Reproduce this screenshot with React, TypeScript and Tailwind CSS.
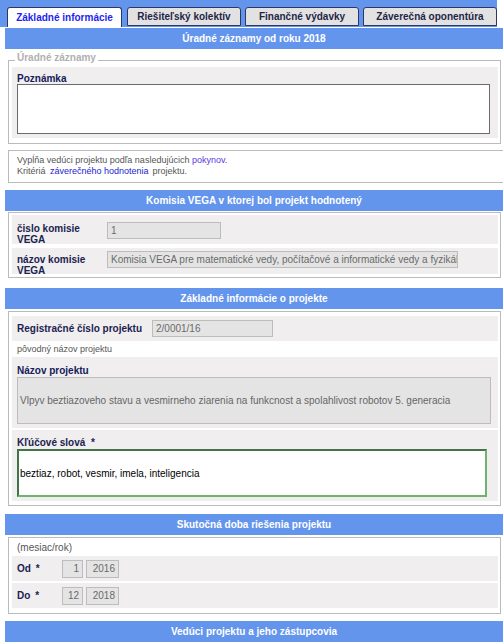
import React from "react"

const TABS = [
  { label: "Základné informácie", width: "w-[115px]", gap: "" },
  { label: "Riešiteľský kolektív", width: "w-[114px]", gap: "ml-[5px]" },
  { label: "Finančné výdavky", width: "w-[114px]", gap: "ml-[4px]" },
  { label: "Záverečná oponentúra", width: "w-[134px]", gap: "ml-[4px]" },
]

function Header({ title, className = "" }: { title: string; className?: string }) {
  return (
    <div
      className={`ml-[5px] flex h-[21px] w-[498px] items-center justify-center bg-[#6495ed] text-[10px] font-bold text-white ${className}`}
    >
      {title}
    </div>
  )
}

function Box({ children, className = "" }: { children: React.ReactNode; className?: string }) {
  return (
    <div className={`ml-[8px] w-[493px] border border-[#bbbbbb] pr-[2px] pl-[3px] ${className}`}>
      {children}
    </div>
  )
}

function Field({ value, className = "" }: { value: string; className?: string }) {
  return (
    <div
      className={`flex h-[17px] items-center overflow-hidden border border-[#bcbcbc] bg-[#e4e4e4] px-[3px] text-[10px] whitespace-nowrap text-[#6a6a6a] ${className}`}
    >
      {value}
    </div>
  )
}

export default function App() {
  return (
    <div className="w-[503px] overflow-hidden bg-white font-['Liberation_Sans',Arial,sans-serif] text-[#555]">
      {/* tabs */}
      <div className="flex h-[27px] w-[497px] items-end bg-[#6495ed] pl-[7px]">
        {TABS.map((tab, i) =>
          i === 0 ? (
            <div
              key={tab.label}
              className={`${tab.width} flex h-[20px] items-center justify-center rounded-t-[3px] border border-b-0 border-[#2d3766] bg-white text-[10px] font-bold text-[#1f1ff0]`}
            >
              {tab.label}
            </div>
          ) : (
            <div
              key={tab.label}
              className={`${tab.width} ${tab.gap} mb-[1px] flex h-[19px] items-center justify-center rounded-t-[3px] border border-[#2d3766] bg-[#e2e2e2] text-[10px] font-bold text-[#1f2547]`}
            >
              {tab.label}
            </div>
          ),
        )}
      </div>

      <Header title="Úradné záznamy od roku 2018" className="mt-[1px]" />

      {/* úradné záznamy */}
      <fieldset className="mt-[4px] ml-[8px] w-[493px] min-w-0 border border-[#bbbbbb] pr-[2px] pb-[5px] pl-[3px]">
        <legend className="ml-[3px] px-[2px] pb-[4px] text-[10px] leading-[10px] font-bold text-[#b0b0b0]">
          Úradné záznamy
        </legend>
        <div className="bg-[#f0eeee] pt-[6px] pr-[8px] pb-[4px] pl-[5px]">
          <div className="text-[10px] leading-[11px] font-bold text-[#14205a]">Poznámka</div>
          <div className="h-[50px] w-[473px] border border-[#6b6b6b] bg-white" />
        </div>
      </fieldset>

      {/* pokyny */}
      <div className="mt-[6px] ml-[8px] w-[500px] border border-[#bbbbbb] pt-[4px] pb-[5px] pl-[8px] text-[9px] leading-[11px]">
        <div>
          Vypĺňa vedúci projektu podľa nasledujúcich <span className="text-[#5a38e0]">pokynov.</span>
        </div>
        <div>
          Kritériá <span className="ml-[2px] text-[#2323d0]">záverečného hodnotenia</span>
          <span className="ml-[4px]">projektu.</span>
        </div>
      </div>

      <Header title="Komisia VEGA v ktorej bol projekt hodnotený" className="mt-[7px]" />

      <Box className="mt-[1px] pt-[2px] pb-[3px]">
        <div className="flex h-[29px] bg-[#f0eeee] pl-[5px]">
          <div className="w-[90px] pt-[8px] text-[10px] leading-[11px] font-bold text-[#1a2350]">
            čislo komisie
            <br />
            VEGA
          </div>
          <Field value="1" className="mt-[7px] w-[114px]" />
        </div>
        <div className="mt-[4px] flex h-[26px] bg-[#f0eeee] pl-[5px]">
          <div className="w-[90px] pt-[6px] text-[10px] leading-[11px] font-bold text-[#1a2350]">
            názov komisie
            <br />
            VEGA
          </div>
          <Field
            value="Komisia VEGA pre matematické vedy, počítačové a informatické vedy a fyzikál"
            className="mt-[3px] w-[351px]"
          />
        </div>
      </Box>

      <Header title="Základné informácie o projekte" className="mt-[10px]" />

      <Box className="mt-[2px] pt-[4px] pb-[4px]">
        <div className="flex h-[25px] items-center bg-[#f0eeee] pl-[5px]">
          <div className="w-[135px] text-[10px] leading-[12px] font-bold text-[#1a2350]">
            Registračné číslo projektu
          </div>
          <Field value="2/0001/16" className="w-[121px]" />
        </div>
        <div className="h-[16px] pl-[5px] text-[9px] leading-[16px]">pôvodný názov projektu</div>
        <div className="bg-[#f0eeee] pt-[8px] pb-[4px] pl-[5px]">
          <div className="text-[10px] leading-[12px] font-bold text-[#14205a]">Názov projektu</div>
          <div className="flex h-[47px] w-[474px] items-center border border-[#bcbcbc] bg-[#e4e4e4] pl-[2px] text-[10px] text-[#666]">
            Vlpyv beztiazoveho stavu a vesmirneho ziarenia na funkcnost a spolahlivost robotov 5. generacia
          </div>
        </div>
        <div className="mt-[2px] bg-[#f0eeee] pt-[7px] pb-[4px] pl-[5px]">
          <div className="text-[10px] leading-[12px] font-bold text-[#1a2350]">
            Kľúčové slová <span className="ml-[3px]">*</span>
          </div>
          <div className="flex h-[48px] w-[470px] items-center border-2 border-t-[#44734a] border-r-[#70b26f] border-b-[#70b26f] border-l-[#44734a] bg-white pl-[1px] text-[10px] text-black">
            beztiaz, robot, vesmir, imela, inteligencia
          </div>
        </div>
      </Box>

      <Header title="Skutočná doba riešenia projektu" className="mt-[8px]" />

      <Box className="mt-[2px] pt-[2px] pb-[5px]">
        <div className="h-[16px] pl-[5px] text-[10px] leading-[16px]">(mesiac/rok)</div>
        {[
          { label: "Od", month: "1", year: "2016" },
          { label: "Do", month: "12", year: "2018" },
        ].map((row, i) => (
          <div
            key={row.label}
            className={`flex h-[25px] items-center bg-[#f0eeee] pl-[5px] ${i > 0 ? "mt-[2px]" : ""}`}
          >
            <div className="w-[45px] text-[10px] font-bold text-[#1a2350]">
              {row.label} <span className="ml-[2px]">*</span>
            </div>
            <Field value={row.month} className="h-[18px] w-[21px] justify-end" />
            <Field value={row.year} className="ml-[3px] h-[18px] w-[33px] justify-end" />
          </div>
        ))}
      </Box>

      <Header title="Vedúci projektu a jeho zástupcovia" className="mt-[7px]" />
      <div className="h-[20px]" />
    </div>
  )
}
